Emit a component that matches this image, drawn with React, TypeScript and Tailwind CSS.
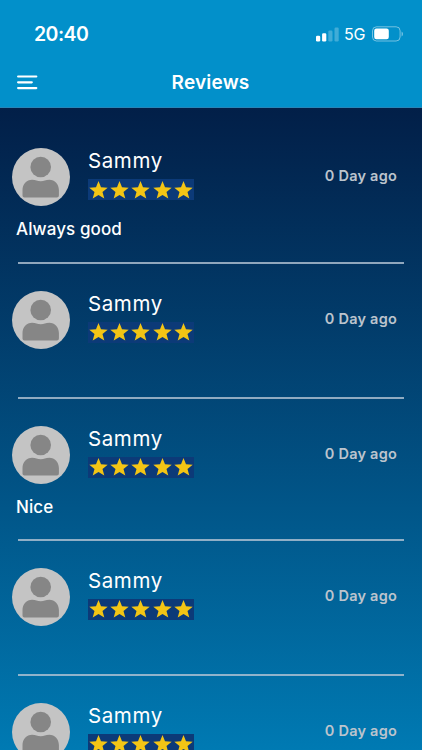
type Review = {
  id: number;
  name: string;
  comment: string;
  date: string;
};

const reviews: Review[] = [
  { id: 1, name: 'Sammy', comment: 'Always good', date: '0 Day ago' },
  { id: 2, name: 'Sammy', comment: '', date: '0 Day ago' },
  { id: 3, name: 'Sammy', comment: 'Nice', date: '0 Day ago' },
  { id: 4, name: 'Sammy', comment: '', date: '0 Day ago' },
  { id: 5, name: 'Sammy', comment: '', date: '0 Day ago' },
];

function StatusBar() {
  return (
    <div className="flex h-[68px] items-center justify-between pl-[34px] pr-[18px] text-white">
      <span className="text-[19.5px] leading-6 font-semibold tracking-[-0.55px]">20:40</span>
      <div className="flex items-center">
        <svg width="23" height="15" viewBox="0 0 23 15" fill="white">
          <rect x="0" y="8.8" width="4.2" height="5.7" rx="1.2" />
          <rect x="6.1" y="6.2" width="4.2" height="8.3" rx="1.2" />
          <rect x="12.3" y="3.5" width="4.2" height="11" rx="1.2" opacity="0.25" />
          <rect x="18.5" y="0.5" width="4.2" height="14" rx="1.2" opacity="0.25" />
        </svg>
        <span className="ml-[5px] w-[22px] text-[16px] leading-5 tracking-[-0.2px]">5G</span>
        <svg className="ml-[6px]" width="32" height="16" viewBox="0 0 32 16" fill="none">
          <rect x="0.5" y="0.8" width="27.6" height="14.2" rx="4" stroke="white" strokeOpacity="0.45" />
          <rect x="2.2" y="2.5" width="14.6" height="10.8" rx="2.2" fill="white" />
          <path d="M29.6 5.5c1.7.7 1.7 4.3 0 5z" fill="white" fillOpacity="0.5" />
        </svg>
      </div>
    </div>
  );
}

function Header() {
  return (
    <div className="grid h-[39px] grid-cols-3 items-start px-[17px] text-white">
      <svg className="mt-[7px]" width="21" height="15" viewBox="0 0 21 15" stroke="white" strokeWidth="2.2" strokeLinecap="round">
        <path d="M1.1 1.5h18.200M1.100 7.300h13.700M1.100 13.100h18.200" />
      </svg>
      <h1 className="-ml-px pt-px text-center text-[19px] leading-7 font-semibold tracking-[0.2px]">Reviews</h1>
    </div>
  );
}

function Avatar() {
  return (
    <svg className="shrink-0" width="58" height="58" viewBox="0 0 58 58">
      <circle cx="29" cy="29" r="29" fill="#c4c4c4" />
      <circle cx="28.7" cy="19" r="10.3" fill="#868686" />
      <path
        d="M10.5 47.5V42c0-6 4-10.3 9.6-10.3 3.6 0 5.2 1.5 8.6 1.5s5-1.5 8.6-1.5c5.6 0 9.6 4.3 9.6 10.3v5.5c0 1.2-.8 2-2 2H12.5c-1.2 0-2-.8-2-2z"
        fill="#868686"
      />
    </svg>
  );
}

function Stars() {
  return (
    <div className="flex h-[21px] w-[106px] items-center justify-around bg-[#0c3a78]">
      {[1, 2, 3, 4, 5].map((n) => (
        <svg key={n} width="19" height="18" viewBox="0 0 19 18" fill="#f3c515">
          <path d="M9.5 0l2.500 6.300 6.700.4-5.200 4.200 1.800 6.600-5.800-3.600-5.800 3.600 1.800-6.600L.3 6.700l6.700-.4z" />
        </svg>
      ))}
    </div>
  );
}

function ReviewItem({ review }: { review: Review }) {
  return (
    <li className="shrink-0 pt-[27px]">
      <div className="flex h-[58px] pl-[11.5px] pr-[25px]">
        <Avatar />
        <div className="ml-[18.5px] flex-1">
          <p className="h-[31px] text-[20.5px] leading-[25px] tracking-[0.6px] text-white">{review.name}</p>
          <Stars />
        </div>
        <span className="mt-[18px] text-[14.500px] leading-5 font-semibold tracking-[0.22px] text-[#bcc4cd]">
          {review.date}
        </span>
      </div>
      {review.comment ? (
        <p className="mt-[11px] mb-[20.300px] ml-4 h-6 text-[17px] leading-6 font-[450] tracking-[0.1px] text-white">
          {review.comment}
        </p>
      ) : (
        <div className="h-12" />
      )}
      <div className="mx-[18px] h-[2px] bg-[#b4c4d4]/80" />
    </li>
  );
}

export default function App() {
  return (
    <div className="flex h-[750px] w-[422px] flex-col overflow-hidden bg-[#0290ca] font-['Inter',sans-serif]">
      <StatusBar />
      <Header />
      <ul className="flex flex-1 flex-col overflow-hidden border-t border-[#2785b7] bg-gradient-to-b from-[#021f48] to-[#007ab3] pt-[13.4px]">
        {reviews.map((review) => (
          <ReviewItem key={review.id} review={review} />
        ))}
      </ul>
    </div>
  );
}
